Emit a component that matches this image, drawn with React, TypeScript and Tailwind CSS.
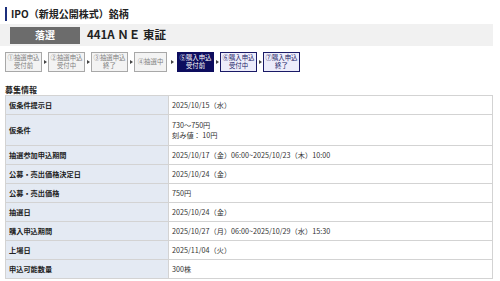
import React from "react";

const steps = [
  { a: "①抽選申込", b: "受付前", kind: "done", w: "w-[37px]" },
  { a: "②抽選申込", b: "受付中", kind: "done", w: "w-[37px]" },
  { a: "③抽選申込", b: "終了", kind: "done", w: "w-[37px]" },
  { a: "④抽選中", b: "", kind: "done", w: "w-[33px]" },
  { a: "⑤購入申込", b: "受付前", kind: "active", w: "w-[37px]" },
  { a: "⑥購入申込", b: "受付中", kind: "todo", w: "w-[37px]" },
  { a: "⑦購入申込", b: "終了", kind: "todo", w: "w-[37px]" },
];

const rows: { label: string; value: React.ReactNode; tall?: boolean }[] = [
  { label: "仮条件提示日", value: "2025/10/15（水）" },
  {
    label: "仮条件",
    value: (
      <>
        <div>730～750円</div>
        <div>刻み値： 10円</div>
      </>
    ),
    tall: true,
  },
  { label: "抽選参加申込期間", value: "2025/10/17（金）06:00~2025/10/23（木）10:00" },
  { label: "公募・売出価格決定日", value: "2025/10/24（金）" },
  { label: "公募・売出価格", value: "750円" },
  { label: "抽選日", value: "2025/10/24（金）" },
  { label: "購入申込期間", value: "2025/10/27（月）06:00~2025/10/29（水）15:30" },
  { label: "上場日", value: "2025/11/04（火）" },
  { label: "申込可能数量", value: "300株" },
];

function Arrow({ wide }: { wide?: boolean }) {
  return (
    <div className={`${wide ? "w-[10px]" : "w-[6px]"} flex justify-center items-center`}>
      <svg width="3" height="4" viewBox="0 0 3 4">
        <polygon points="0,0 3,2 0,4" fill="#444" />
      </svg>
    </div>
  );
}

export default function App() {
  return (
    <div className="w-[500px] h-[281px] bg-white overflow-hidden font-['Noto_Sans_CJK_JP','Noto_Sans',sans-serif] text-[#222]">
      <div className="pt-[7px] pl-[5px]">
        <div className="h-[14px] border-l-2 border-[#1c2f7c] pl-[4px] flex items-center text-[10px] font-bold leading-none">
          IPO（新規公開株式）銘柄
        </div>
      </div>
      <div className="mt-[3px] w-[493px] h-[22px] bg-[#f1f1f1] flex items-center pl-[10px]">
        <div className="w-[70px] h-[17px] bg-[#6c6c6c] text-white text-[10px] font-bold flex items-center justify-center leading-none">
          落選
        </div>
        <div className="ml-[7px] text-[11.5px] font-bold leading-none">441A ＮＥ 東証</div>
      </div>
      <div className="mt-[6px] pl-[5px] flex items-center h-[20px]">
        {steps.map((s, i) => {
          const cls =
            s.kind === "done"
              ? "border-[#a8a8a8] bg-[#f3f3f3] text-[#808080]"
              : s.kind === "active"
              ? "border-[#0d0d5e] bg-[#0d0d5e] text-white"
              : "border-[#1a1a66] bg-[#ececfa] text-[#1a1a66]";
          return (
            <React.Fragment key={i}>
              <div
                className={`${s.w} h-[20px] border ${cls} flex flex-col items-center justify-center text-[6.4px] leading-[8px] whitespace-nowrap`}
              >
                <div>{s.a}</div>
                {s.b && <div>{s.b}</div>}
              </div>
              {i < steps.length - 1 && <Arrow wide={i === 3} />}
            </React.Fragment>
          );
        })}
      </div>
      <div className="mt-[12px] pl-[5px] h-[11px] text-[8px] font-bold leading-[11px]">募集情報</div>
      <div className="ml-[5px] w-[488px]">
        <table className="w-full border-collapse text-[7.2px] leading-[10px]">
          <tbody>
            {rows.map((r, i) => (
              <tr key={i} className={r.tall ? "h-[31px]" : "h-[19px]"}>
                <td className="w-[163px] bg-[#e4eaf3] border border-[#d3d3d3] pl-[3px] font-bold text-[#222] align-middle">
                  {r.label}
                </td>
                <td className="border border-[#d3d3d3] pl-[3px] text-[#333] align-middle">{r.value}</td>
              </tr>
            ))}
          </tbody>
        </table>
      </div>
    </div>
  );
}
